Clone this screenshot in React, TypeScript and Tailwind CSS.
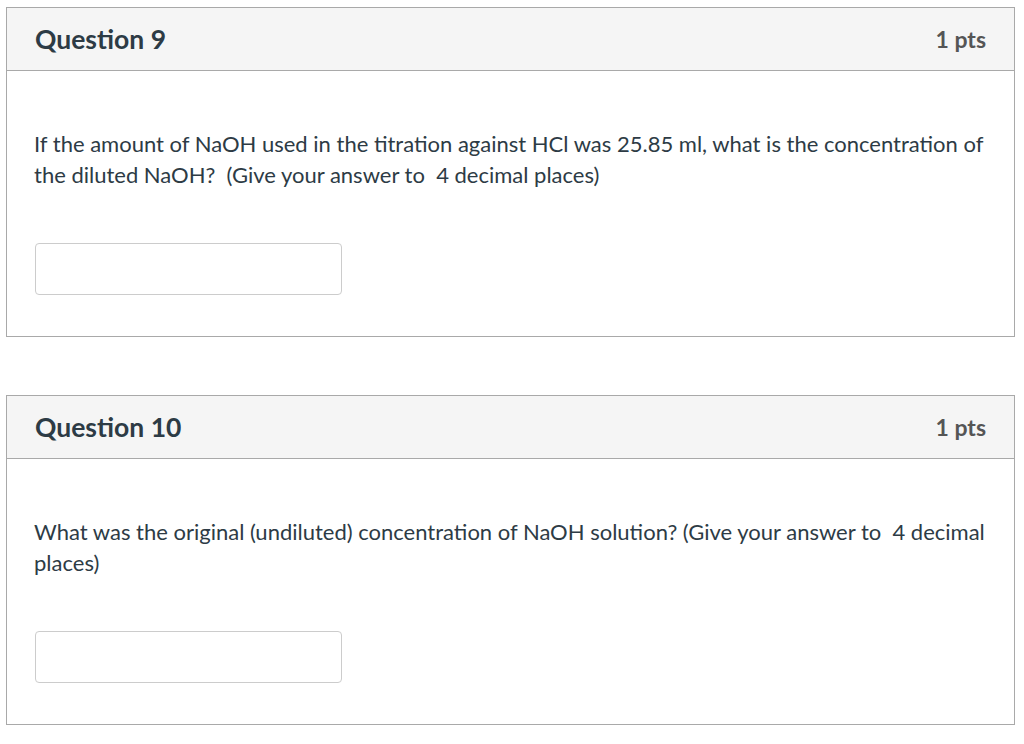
import React from "react";

function Card({ title, text }: { title: string; text: string }) {
  return (
    <div className="w-[1009px] border border-[#a9a9a9] bg-white">
      <div className="flex h-[63px] items-center justify-between border-b border-[#a9a9a9] bg-[#f5f5f5] px-[28px]">
        <div className="text-[26.5px] font-bold leading-[30px] text-[#2d3b45]">{title}</div>
        <div className="text-[23px] font-bold leading-[30px] text-[#555555]">1 pts</div>
      </div>
      <div className="px-[27px] pt-[57px] pb-[41px]">
        <div className="text-[22px] leading-[31px] text-[#2d3b45]">{text}</div>
        <div className="mt-[53px] ml-px h-[52px] w-[307px] rounded-[4px] border border-[#cccccc] bg-white" />
      </div>
    </div>
  );
}

export default function App() {
  return (
    <div
      className="min-h-[744px] bg-white pl-[6px] pt-[7px]"
      style={{ fontFamily: 'Lato, "Helvetica Neue", Arial, sans-serif' }}
    >
      <Card
        title="Question 9"
        text={"If the amount of NaOH used in the titration against HCl was 25.85 ml, what is the concentration of the diluted NaOH?\u00a0 (Give your answer to\u00a0 4 decimal places)"}
      />
      <div className="h-[58px]" />
      <Card
        title="Question 10"
        text={"What was the original (undiluted) concentration of NaOH solution? (Give your answer to\u00a0 4 decimal places)"}
      />
    </div>
  );
}
